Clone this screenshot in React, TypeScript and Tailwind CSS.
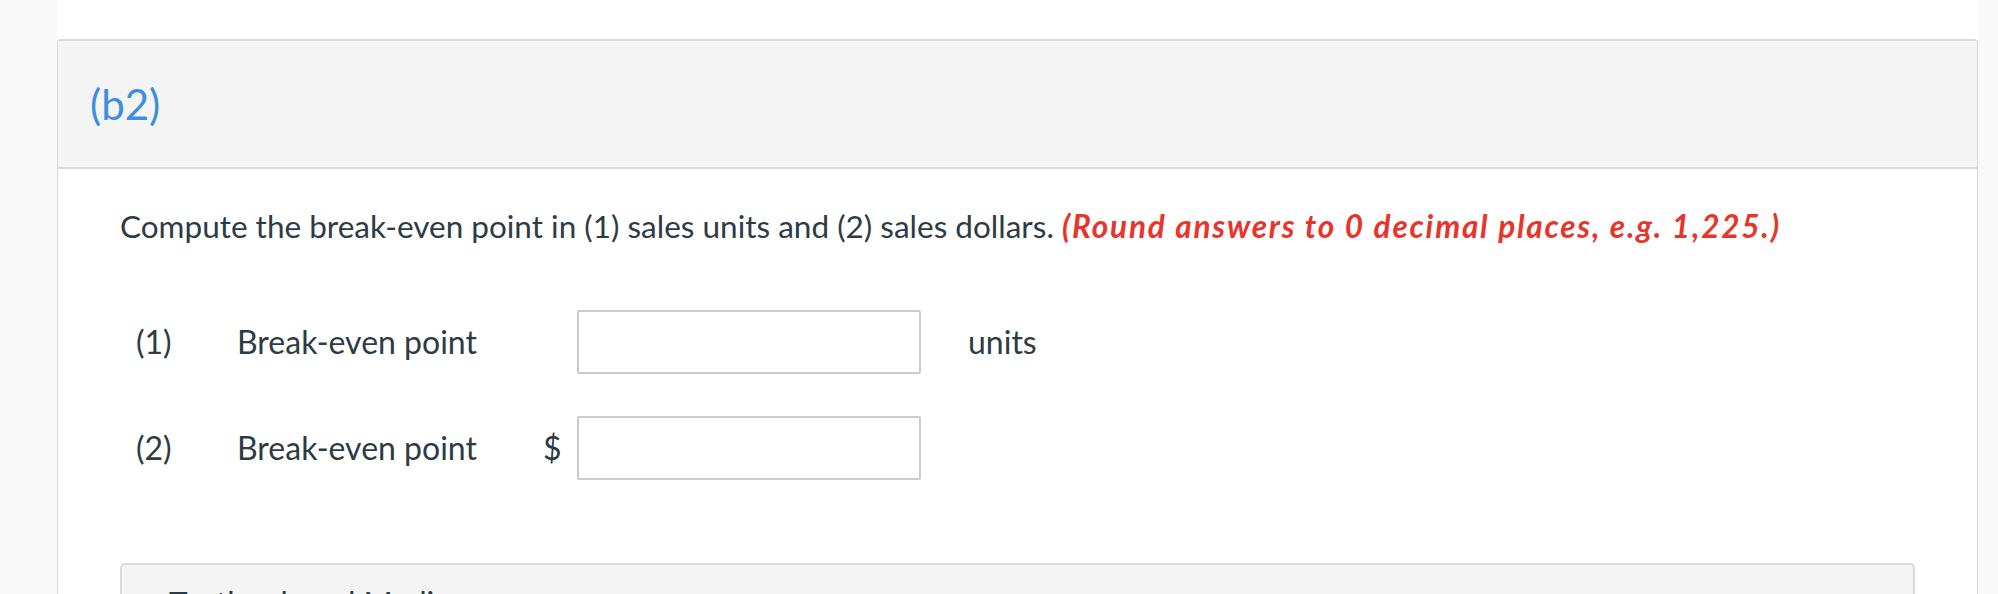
import React from "react";

const rows = [
  { num: "(1)", label: "Break-even point", prefix: "", suffix: "units" },
  { num: "(2)", label: "Break-even point", prefix: "$", suffix: "" },
];

const App = () => {
  return (
    <div
      className="flex h-[594px] w-full overflow-hidden bg-white text-[#2d3b45]"
      style={{ fontFamily: "Lato, 'Noto Sans', sans-serif" }}
    >
      <div className="w-[57px] shrink-0 bg-[#f9f9f9]" />

      <div className="flex-1 pt-[39px]">
        <div className="h-full rounded-t-[4px] border-x border-t-2 border-[#dadada]">
          <div className="flex h-[128px] items-center border-b-2 border-[#dadada] bg-[#f4f4f4] pl-[32px]">
            <span className="text-[42px] font-normal leading-none text-[#3b8fde]">(b2)</span>
          </div>

          <div className="pl-[62px] pr-[62px]">
            <p className="mt-[36px] text-[31.5px] leading-[42px]">
              Compute the break-even point in (1) sales units and (2) sales dollars.{" "}
              <span className="font-bold italic tracking-[1.8px] text-[#e8352b]">
                (Round answers to 0 decimal places, e.g. 1,225.)
              </span>
            </p>

            <div className="mt-[63px] flex flex-col gap-[42px]">
              {rows.map((row) => (
                <div key={row.num} className="flex h-[64px] items-center text-[32px]">
                  <span className="w-[117px] pl-[16px]">{row.num}</span>
                  <span className="w-[306px]">{row.label}</span>
                  <span className="w-[34px]">{row.prefix}</span>
                  <input
                    type="text"
                    className="h-[64px] w-[344px] rounded-[2px] border-2 border-[#cbcbcb] bg-white"
                  />
                  <span className="pl-[47px]">{row.suffix}</span>
                </div>
              ))}
            </div>

            <div className="mt-[83px] h-[60px] rounded-t-[5px] border-x-2 border-t-2 border-[#dadada] bg-[#f4f4f4] pl-[47px] pt-[14px]">
              <span className="text-[31.5px] text-[#2d3b45]">Textbook and Media</span>
            </div>
          </div>
        </div>
      </div>

      <div className="w-[20px] shrink-0 bg-[#f9f9f9]" />
    </div>
  );
};

export default App;
